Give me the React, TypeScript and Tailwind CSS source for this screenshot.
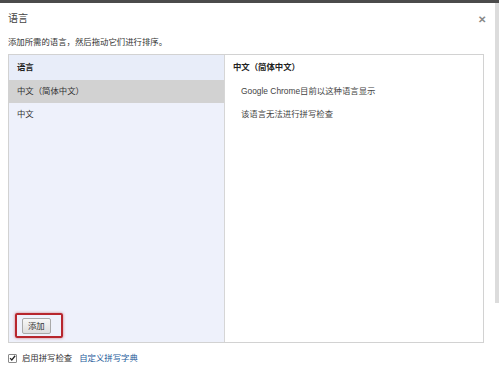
import React from "react";

const font = { fontFamily: '"Liberation Sans", "Noto Sans CJK SC", sans-serif' };

export default function App() {
  return (
    <div className="w-[499px] h-[365px] bg-white overflow-hidden flex flex-col text-[#333]" style={font}>
      {/* top window edge */}
      <div className="h-[3px] bg-[#4b4b4b] shrink-0" />
      <div className="flex flex-1">
        <div className="flex-1 flex flex-col">
          {/* title */}
          <div className="flex items-start justify-between pl-[8px] pr-[8px] pt-[9px] h-[32px]">
            <span className="text-[10px] leading-[14px] text-[#444]">语言</span>
            <span className="text-[10px] leading-[11px] font-bold text-[#888] mt-[2px] mr-[1px]">✕</span>
          </div>
          {/* subtitle */}
          <div className="pl-[8px] text-[8.4px] leading-[14px] text-[#333] h-[19px]">
            添加所需的语言，然后拖动它们进行排序。
          </div>
          {/* languages box */}
          <div className="ml-[8px] mr-[11px] h-[289px] border border-[#d2d2d2] flex">
            {/* left pane */}
            <div className="w-[216px] bg-[#eef1fb] border-r border-[#d6d6d6] flex flex-col">
              <div className="h-[25px] bg-[#e8edf9] flex items-center pl-[8px] text-[8.4px] font-bold text-[#222]">
                语言
              </div>
              <div className="h-[23px] bg-[#d2d2d2] flex items-center pl-[8px] text-[8.4px] text-[#333]">
                中文（简体中文）
              </div>
              <div className="h-[23px] flex items-center pl-[8px] text-[8.4px] text-[#333]">
                中文
              </div>
              <div className="flex-1" />
              <div className="pl-[6px] pb-[4px]">
                <div className="inline-flex w-[48px] h-[25px] border-[2px] border-[#b7262d] rounded-[2px] shadow-[0_0_3px_rgba(183,38,45,0.6)] items-center pl-[5px]">
                  <button className="h-[16px] px-[5px] border border-[#a9a9a9] rounded-[2px] bg-gradient-to-b from-[#f7f7f7] to-[#dedede] text-[8.4px] leading-[14px] text-[#333]">
                    添加
                  </button>
                </div>
              </div>
            </div>
            {/* right pane */}
            <div className="flex-1 bg-white flex flex-col">
              <div className="h-[25px] flex items-center pl-[8px] text-[8.4px] font-bold text-[#222]">
                中文（简体中文）
              </div>
              <div className="h-[23px] flex items-center pl-[16px] text-[8.4px] text-[#444]">
                Google Chrome目前以这种语言显示
              </div>
              <div className="h-[23px] flex items-center pl-[16px] text-[8.4px] text-[#444]">
                该语言无法进行拼写检查
              </div>
            </div>
          </div>
          {/* spell check */}
          <div className="flex items-center pl-[8px] mt-[9px] gap-[4px]">
            <div className="w-[9px] h-[9px] border border-[#8a8a8a] rounded-[1px] bg-white flex items-center justify-center">
              <svg viewBox="0 0 10 10" className="w-[8px] h-[8px]">
                <path d="M1.5 5.2 L4 7.8 L8.8 1.8" fill="none" stroke="#222" strokeWidth="1.8" />
              </svg>
            </div>
            <span className="text-[8.4px] text-[#333] ml-[1px]">启用拼写检查</span>
            <span className="text-[8.4px] text-[#1d5b9a] ml-[3px]">自定义拼写字典</span>
          </div>
        </div>
        {/* right edge strip */}
        <div className="w-[4px] flex flex-col">
          <div className="h-[300px] bg-[#dcdcdc]" />
        </div>
      </div>
    </div>
  );
}
